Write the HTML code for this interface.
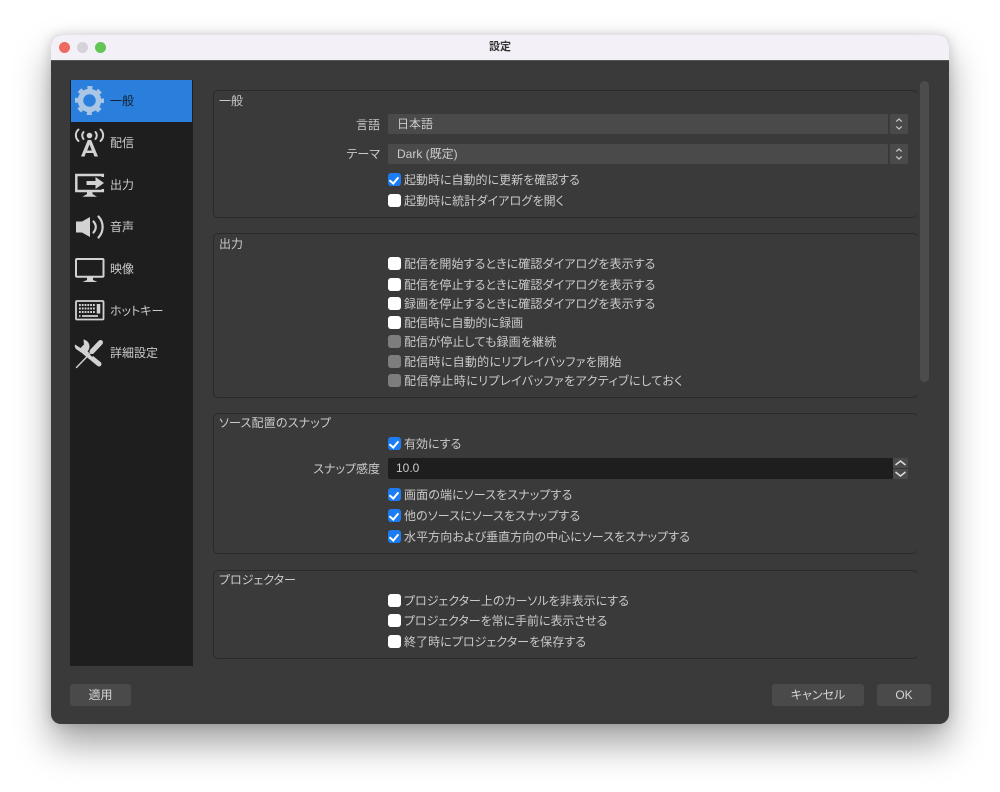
<!DOCTYPE html>
<html lang="ja"><head><meta charset="utf-8"><style>
html,body{margin:0;padding:0;width:1000px;height:792px;background:#fff;overflow:hidden}
body{position:relative;font-family:"Liberation Sans","Noto Sans CJK JP",sans-serif;font-size:12px;color:#cacaca;font-feature-settings:"palt"}
.a{position:absolute}
.t{position:absolute;line-height:16px;height:16px;white-space:nowrap}
.r{text-align:right;width:120px;left:260px}
.g{position:absolute;left:213px;width:705px;border:1px solid #2a2a2a;border-radius:5px;box-sizing:border-box}
.c{position:absolute;left:388px;width:13px;height:13px;border-radius:3px;background:#fff}
.c.d{background:#7d7d7d}
.c.k{background:#1c7df3}
.c.k::after{content:"";position:absolute;left:3px;top:1.5px;width:4px;height:7px;border:solid #fff;border-width:0 2px 2px 0;transform:rotate(40deg)}
.b{position:absolute;top:684px;height:22px;line-height:22px;background:#4a4a4a;border-radius:3px;text-align:center;color:#d5d5d5}
.box{position:absolute;background:#4a4a4a;border-radius:2px}
</style></head><body>
<div class="a" style="left:51px;top:35px;width:898px;height:689px;border-radius:10px;background:#3a3a3a;box-shadow:0 20px 36px rgba(0,0,0,.36),0 0 12px rgba(0,0,0,.16);overflow:hidden">
<div class="a" style="left:0;top:0;width:898px;height:26px;background:#f3f0f7;border-bottom:1px solid #555;box-sizing:border-box"></div>
</div>
<div class="a" style="left:58.5px;top:41.5px;width:11px;height:11px;border-radius:50%;background:#ee6a5f"></div>
<div class="a" style="left:77px;top:41.5px;width:11px;height:11px;border-radius:50%;background:#d5d2d9"></div>
<div class="a" style="left:95px;top:41.5px;width:11px;height:11px;border-radius:50%;background:#62c554"></div>
<div class="t" style="left:450px;width:100px;top:39px;text-align:center;font-size:11px;font-weight:bold;color:#333">設定</div>

<div class="a" style="left:70px;top:80px;width:123px;height:586px;background:#1e1e1e"></div>
<div class="a" style="left:71px;top:80px;width:121px;height:42px;background:#2a7fdc"></div>
<div class="t" style="left:110px;top:93px;color:#10202f">一般</div>
<div class="t" style="left:110px;top:135px">配信</div>
<div class="t" style="left:110px;top:177px">出力</div>
<div class="t" style="left:110px;top:219px">音声</div>
<div class="t" style="left:110px;top:261px">映像</div>
<div class="t" style="left:110px;top:303px">ホットキー</div>
<div class="t" style="left:110px;top:345px">詳細設定</div>

<svg class="a" style="left:0;top:0" width="200" height="380" viewBox="0 0 200 380" fill="none">
<!-- gear -->
<g stroke="#a9c6e4"><circle cx="89.500" cy="100.500" r="9" stroke-width="5.500"/><circle cx="89.500" cy="100.500" r="12.500" stroke-width="4" stroke-dasharray="4.900 4.917" stroke-dashoffset="2.450"/></g>
<!-- antenna -->
<circle cx="89.500" cy="135.500" r="2.800" fill="#d2d2d2"/>
<path d="M87.800 140h3.400l6.800 16.500h-3.600l-1.200-3.500h-7.400l-1.200 3.500h-3.600zM89.500 144.500l-2.300 6h4.600z" fill="#d2d2d2" fill-rule="evenodd"/>
<g stroke="#d2d2d2" stroke-width="2" stroke-linecap="round">
<path d="M78.500 129.500c-3.500 3-3.500 8.500 0 11.500M100.500 129.500c3.500 3 3.500 8.500 0 11.500M83.500 132c-1.700 2-1.700 5 0 7M95.500 132c1.700 2 1.700 5 0 7"/>
</g>
<!-- monitor with arrow -->
<path d="M102.800 177v-2H76.300v16h26.500v-2" stroke="#d2d2d2" stroke-width="2.500"/>
<path d="M87 192h5.500v2l4.500 2.800h-14.500l4.500-2.800z" fill="#d2d2d2"/>
<path d="M86.500 181h9v-4l8.500 6-8.500 6v-4h-9z" fill="#d2d2d2"/>
<!-- speaker -->
<path d="M76 221.500h6l8-4.500v20l-8-4.500h-6z" fill="#d2d2d2"/>
<path d="M93.500 221.500c3 3.500 3 7.500 0 11M98.500 216.500c5.500 6 5.500 15 0 21" stroke="#d2d2d2" stroke-width="2.200" stroke-linecap="round"/>
<!-- monitor -->
<rect x="76" y="259" width="27.500" height="17.700" rx="1" stroke="#d2d2d2" stroke-width="2"/>
<path d="M87 277.500h6l0 2.500 4.500 2h-15l4.500-2z" fill="#d2d2d2"/>
<!-- keyboard -->
<rect x="76" y="301" width="27.500" height="18.500" rx="1" stroke="#d2d2d2" stroke-width="1.800"/>
<g stroke="#d2d2d2" stroke-width="2" stroke-dasharray="1.800 1"><path d="M79 305h16M79 308.500h16M79 312h16"/></g>
<path d="M98.500 304v9.500" stroke="#d2d2d2" stroke-width="3.500"/>
<path d="M82 316h16M79 316h1.500" stroke="#d2d2d2" stroke-width="1.800"/>
<!-- tools -->
<g stroke="#d2d2d2" stroke-linecap="round">
<path d="M85 352.500l14 11.500" stroke-width="5"/>
<path d="M84 340.500c-5-1.500-9 2.500-8.500 5.500M79 340l3.500 4.500-3 3-4-3" stroke-width="0"/>
</g>
<path d="M83.500 339.500c3.500 .5 6 3.500 6 7 0 2-.8 3.500-2 5l-3.500 3-8-5.500c-1.200-1.500-1.500-3-1-4.500l5.500 3.500 3.500-3.500z" fill="#d2d2d2"/>
<path d="M93 356l-3.500-3.500" stroke="#1e1e1e" stroke-width="2.500"/>
<g stroke="#d2d2d2" stroke-linecap="round">
<path d="M100.500 342.500l-8.500 9" stroke-width="5"/>
<path d="M92 351.500L76.500 367.500" stroke-width="1.400"/>
</g>
</svg>

<div class="g" style="top:90px;height:128px"></div>
<div class="g" style="top:233px;height:165px"></div>
<div class="g" style="top:413px;height:141px"></div>
<div class="g" style="top:570px;height:89px"></div>
<div class="a" style="left:917px;top:85px;width:3px;height:580px;background:#3a3a3a"></div>
<div class="a" style="left:920px;top:81px;width:9px;height:301px;border-radius:5px;background:#4c4c4c"></div>

<div class="t" style="left:219px;top:93px">一般</div>
<div class="t" style="left:219px;top:236px">出力</div>
<div class="t" style="left:219px;top:415px;letter-spacing:.2px">ソース配置のスナップ</div>
<div class="t" style="left:219px;top:572px">プロジェクター</div>

<div class="t r" style="top:117px">言語</div>
<div class="box" style="left:388px;top:114px;width:500px;height:20px"></div>
<div class="box" style="left:890px;top:114px;width:18px;height:20px"></div>
<div class="t" style="left:397px;top:116px">日本語</div>
<div class="t r" style="top:146px">テーマ</div>
<div class="box" style="left:388px;top:144px;width:500px;height:20px"></div>
<div class="box" style="left:890px;top:144px;width:18px;height:20px"></div>
<div class="t" style="left:397px;top:146px">Dark (既定)</div>
<svg class="a" style="left:890px;top:114px" width="18" height="50" fill="none" stroke="#c4c4c4" stroke-width="1.200"><path d="M6.300 7.500l2.700-2.500 2.700 2.500M6.300 12.500l2.700 2.500 2.700-2.500M6.300 37.500l2.700-2.500 2.700 2.500M6.300 42.500l2.700 2.500 2.700-2.500"/></svg>

<div class="c k" style="top:173px"></div><div class="t" style="left:404px;top:172px">起動時に自動的に更新を確認する</div>
<div class="c" style="top:194px"></div><div class="t" style="left:404px;top:193px;letter-spacing:.14px">起動時に統計ダイアログを開く</div>

<div class="c" style="top:257px"></div><div class="t" style="left:404px;top:256px;letter-spacing:.1px">配信を開始するときに確認ダイアログを表示する</div>
<div class="c" style="top:278px"></div><div class="t" style="left:404px;top:277px;letter-spacing:.1px">配信を停止するときに確認ダイアログを表示する</div>
<div class="c" style="top:297px"></div><div class="t" style="left:404px;top:296px;letter-spacing:.1px">録画を停止するときに確認ダイアログを表示する</div>
<div class="c" style="top:316px"></div><div class="t" style="left:404px;top:315px">配信時に自動的に録画</div>
<div class="c d" style="top:335px"></div><div class="t" style="left:404px;top:334px;letter-spacing:.15px">配信が停止しても録画を継続</div>
<div class="c d" style="top:355px"></div><div class="t" style="left:404px;top:354px;letter-spacing:.27px">配信時に自動的にリプレイバッファを開始</div>
<div class="c d" style="top:374px"></div><div class="t" style="left:404px;top:373px;letter-spacing:.44px">配信停止時にリプレイバッファをアクティブにしておく</div>

<div class="c k" style="top:437px"></div><div class="t" style="left:404px;top:436px">有効にする</div>
<div class="t r" style="top:461px">スナップ感度</div>
<div class="a" style="left:388px;top:458px;width:505px;height:21px;background:#1e1e1e;border-radius:2px"></div>
<div class="t" style="left:396px;top:460px">10.0</div>
<div class="box" style="left:893px;top:458px;width:15px;height:21px"></div>
<svg class="a" style="left:893px;top:458px" width="15" height="21" fill="none" stroke="#dcdcdc" stroke-width="1.500"><path d="M2.500 7l5-4 5 4M2.500 14l5 4 5-4"/><path d="M0 10.500h15" stroke="#333" stroke-width="1"/></svg>
<div class="c k" style="top:488px"></div><div class="t" style="left:404px;top:487px;letter-spacing:.13px">画面の端にソースをスナップする</div>
<div class="c k" style="top:509px"></div><div class="t" style="left:404px;top:508px;letter-spacing:.12px">他のソースにソースをスナップする</div>
<div class="c k" style="top:530px"></div><div class="t" style="left:404px;top:529px;letter-spacing:.08px">水平方向および垂直方向の中心にソースをスナップする</div>

<div class="c" style="top:594px"></div><div class="t" style="left:404px;top:593px">プロジェクター上のカーソルを非表示にする</div>
<div class="c" style="top:614px"></div><div class="t" style="left:404px;top:613px;letter-spacing:-.05px">プロジェクターを常に手前に表示させる</div>
<div class="c" style="top:635px"></div><div class="t" style="left:404px;top:634px;letter-spacing:.06px">終了時にプロジェクターを保存する</div>

<div class="b" style="left:70px;width:61px">適用</div>
<div class="b" style="left:772px;width:92px">キャンセル</div>
<div class="b" style="left:877px;width:54px">OK</div>
</body></html>
